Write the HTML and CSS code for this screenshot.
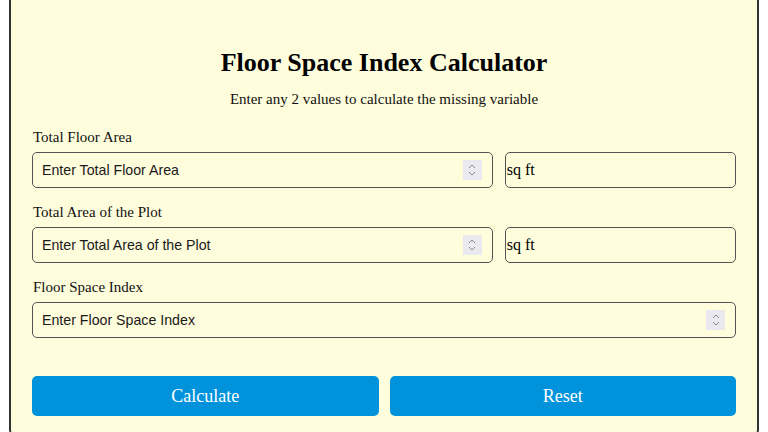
FILE: index.html
```html
<!DOCTYPE html>
<html lang="en">
<head>
  <meta charset="UTF-8">
  <meta name="viewport" content="width=device-width, initial-scale=1.0">
  <title>Floor Space Index Calculator</title>
  <link rel="stylesheet" href="styles.css">
</head>
<body>
  <div class="calculator">
    <h1>Floor Space Index Calculator</h1>
    <p class="hint">Enter any 2 values to calculate the missing variable</p>
    <div class="field">
      <label for="floorArea">Total Floor Area</label>
      <div class="row">
        <div class="input-box wide">
          <input type="text" id="floorArea" placeholder="Enter Total Floor Area">
          <span class="spin"><svg width="10" height="14" viewBox="0 0 10 14"><path d="M2 5 L5 2 L8 5 M2 9 L5 12 L8 9" fill="none" stroke="#8a8a92" stroke-width="1"/></svg></span>
        </div>
        <div class="input-box unit"><span>sq ft</span></div>
      </div>
    </div>
    <div class="field">
      <label for="plotArea">Total Area of the Plot</label>
      <div class="row">
        <div class="input-box wide">
          <input type="text" id="plotArea" placeholder="Enter Total Area of the Plot">
          <span class="spin"><svg width="10" height="14" viewBox="0 0 10 14"><path d="M2 5 L5 2 L8 5 M2 9 L5 12 L8 9" fill="none" stroke="#8a8a92" stroke-width="1"/></svg></span>
        </div>
        <div class="input-box unit"><span>sq ft</span></div>
      </div>
    </div>
    <div class="field">
      <label for="fsi">Floor Space Index</label>
      <div class="row">
        <div class="input-box wide">
          <input type="text" id="fsi" placeholder="Enter Floor Space Index">
          <span class="spin"><svg width="10" height="14" viewBox="0 0 10 14"><path d="M2 5 L5 2 L8 5 M2 9 L5 12 L8 9" fill="none" stroke="#8a8a92" stroke-width="1"/></svg></span>
        </div>
      </div>
    </div>
    <div class="buttons">
      <button>Calculate</button>
      <button>Reset</button>
    </div>
  </div>
</body>
</html>
```
FILE: styles.css
```css
body {
  margin: 0;
  background-color: #fff;
  font-family: "Liberation Serif", "Times New Roman", serif;
  color: #111;
}
.calculator {
  box-sizing: border-box;
  width: 750px;
  margin: 0 auto;
  padding: 48px 21px 20px;
  background-color: #fffddc;
  border: 2px solid #333;
  border-top: none;
  border-radius: 0 0 8px 8px;
}
h1 {
  margin: 0;
  font-size: 26px;
  line-height: 30px;
  text-align: center;
  color: #000;
}
.hint {
  margin: 13px 0 21px;
  font-size: 15px;
  line-height: 17px;
  text-align: center;
}
.field {
  margin-bottom: 16px;
}
.field label {
  display: block;
  font-size: 15px;
  line-height: 17px;
  margin: 0 0 6px 1px;
}
.row {
  display: flex;
  gap: 12px;
}
.input-box {
  box-sizing: border-box;
  min-width: 0;
  height: 36px;
  border: 1px solid #555;
  border-radius: 5px;
  display: flex;
  align-items: center;
}
.wide {
  flex: 2 1 0;
}
.unit {
  flex: 1 1 0;
  font-size: 16px;
  color: #000;
}
.unit span {
  margin-left: 1px;
}
.input-box input {
  flex: 1;
  min-width: 0;
  border: none;
  outline: none;
  background: transparent;
  padding: 0 0 0 9px;
  font-family: "Liberation Sans", Arial, sans-serif;
  font-size: 14.2px;
  color: #111;
}
.input-box input::placeholder {
  color: #1a1a1a;
}
.spin {
  width: 19px;
  height: 20px;
  margin-right: 10px;
  background-color: #e9e9ef;
  display: flex;
  align-items: center;
  justify-content: center;
}
.buttons {
  display: flex;
  gap: 11px;
  margin-top: 38px;
}
.buttons button {
  flex: 1 1 0;
  height: 40px;
  border: none;
  border-radius: 5px;
  background-color: #0093dc;
  color: #fff;
  font-family: "Liberation Serif", "Times New Roman", serif;
  font-size: 18px;
  cursor: pointer;
}
```
